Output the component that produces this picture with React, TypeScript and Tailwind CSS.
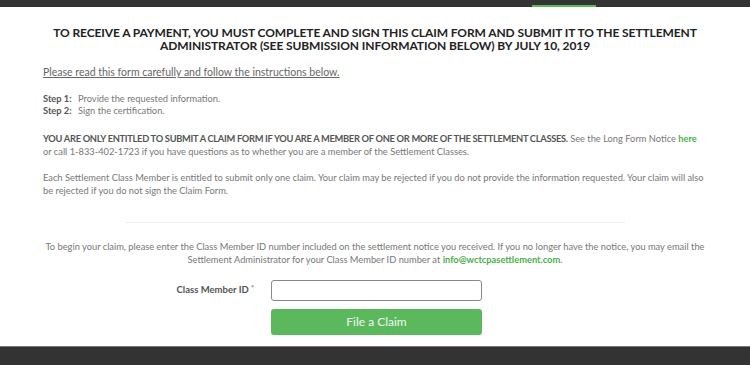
import React from 'react';

export default function App() {
  return (
    <div className="min-h-[365px] bg-white flex flex-col font-['Lato','Open_Sans',sans-serif] text-[#777]">
      {/* Top nav strip */}
      <div className="h-[7px] bg-[#333] flex justify-start shrink-0">
        <div className="ml-[532px] w-[64px] h-[2px] mt-[5px] bg-[#5cb85c]" />
      </div>

      <div className="flex-1 w-[664px] mx-auto">
        <h1 className="mt-[19px] text-center text-[12px] leading-[13px] font-bold text-[#222] uppercase tracking-[-0.1px]">
          To receive a payment, you must complete and sign this claim form and submit it to the settlement administrator (see submission information below) by July 10, 2019
        </h1>

        <p className="mt-[14px] text-[10.5px] leading-[13px] text-[#666] underline">
          Please read this form carefully and follow the instructions below.
        </p>

        <div className="mt-[14px] text-[9.3px] leading-[12px]">
          <div className="flex">
            <span className="w-[35px] font-bold text-[#555]">Step 1:</span>
            <span>Provide the requested information.</span>
          </div>
          <div className="flex">
            <span className="w-[35px] font-bold text-[#555]">Step 2:</span>
            <span>Sign the certification.</span>
          </div>
        </div>

        <p className="mt-[15px] text-[9.3px] leading-[13px]">
          <span className="font-bold text-[#555] tracking-[-0.3px]">YOU ARE ONLY ENTITLED TO SUBMIT A CLAIM FORM IF YOU ARE A MEMBER OF ONE OR MORE OF THE SETTLEMENT CLASSES.</span>{' '}
          See the Long Form Notice <a className="font-bold text-[#4cae4c]">here</a> or call 1-833-402-1723 if you have questions as to whether you are a member of the Settlement Classes.
        </p>

        <p className="mt-[13px] text-[9.3px] leading-[13px]">
          Each Settlement Class Member is entitled to submit only one claim. Your claim may be rejected if you do not provide the information requested. Your claim will also be rejected if you do not sign the Claim Form.
        </p>

        <hr className="mt-[25px] mx-auto w-[500px] border-t border-[#eee]" />

        <div className="mt-[18px] flex flex-col items-center text-[9.3px] leading-[12.5px]">
          <span className="whitespace-nowrap">
            To begin your claim, please enter the Class Member ID number included on the settlement notice you received. If you no longer have the notice, you may email the
          </span>
          <span className="whitespace-nowrap">
            Settlement Administrator for your Class Member ID number at{' '}
            <a className="font-bold text-[#4cae4c]">info@wctcpasettlement.com</a>.
          </span>
        </div>

        <div className="mt-[14px] flex items-center">
          <label className="w-[228px] pr-[17px] text-right text-[9.5px] font-bold text-[#555]">
            Class Member ID <span className="text-[#777] align-top text-[7px]">*</span>
          </label>
          <input className="w-[211px] h-[21px] rounded-[3px] border border-[#888] bg-white" />
        </div>

        <div className="mt-[8px] ml-[228px] flex">
          <button className="w-[211px] h-[26px] rounded-[3px] bg-[#5cb85c] text-white/90 text-[12px]">
            File a Claim
          </button>
        </div>
      </div>

      <div className="mt-[11px] h-[19px] bg-[#333] border-t border-[#777] shrink-0" />
    </div>
  );
}
